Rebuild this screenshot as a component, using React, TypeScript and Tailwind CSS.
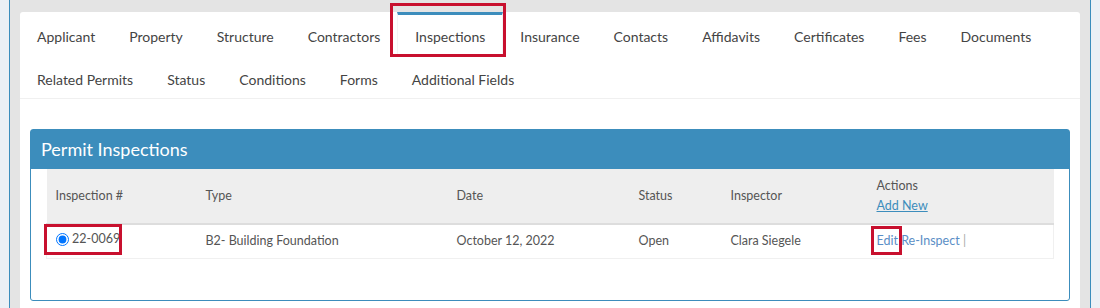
const tabsTop = [
  'Applicant',
  'Property',
  'Structure',
  'Contractors',
  'Inspections',
  'Insurance',
  'Contacts',
  'Affidavits',
  'Certificates',
  'Fees',
  'Documents',
];
const tabsBottom = ['Related Permits', 'Status', 'Conditions', 'Forms', 'Additional Fields'];

function Tab({ label, active }: { label: string; active?: boolean }) {
  return (
    <li className="relative">
      <a
        className={`flex items-center h-[43px] pt-[2px] px-[17px] border-t-[3px] text-[14px] text-[#444] ${
          active ? 'border-[#3c8dbc] border-x border-x-[#f4f4f4] bg-white' : 'border-transparent'
        }`}
      >
        {label}
      </a>
      {active && (
        <span className="absolute -left-[7px] -right-[3px] -top-[9px] bottom-[-2px] border-[3px] border-[#c8102e] pointer-events-none" />
      )}
    </li>
  );
}

export default function App() {
  return (
    <div
      className="w-[1100px] h-[308px] overflow-hidden bg-[#ecf0f5] px-[9px]"
      style={{ fontFamily: 'Lato, "Liberation Sans", sans-serif' }}
    >
      <div className="h-full border-x border-[#3c8dbc] bg-[#e4e4e4] px-[10px] pt-3">
        <div className="h-full bg-white rounded-t-[3px]">
          {/* tabs */}
          <div className="border-b border-[#f0f0f0]">
            <ul className="flex">
              {tabsTop.map((t) => (
                <Tab key={t} label={t} active={t === 'Inspections'} />
              ))}
            </ul>
            <ul className="flex">
              {tabsBottom.map((t) => (
                <Tab key={t} label={t} />
              ))}
            </ul>
          </div>

          {/* panel */}
          <div className="px-[10px] pt-[30px]">
            <div className="border border-[#3c8dbc] rounded-[3px]">
              <div className="bg-[#3c8dbc] h-[39px] flex items-center px-[10px] text-white text-[18px]">
                Permit Inspections
              </div>
              <div className="px-[15px] pb-[41px]">
                <table className="w-full text-[12.5px] text-[#555] border-collapse">
                  <colgroup>
                    <col className="w-[159px]" />
                    <col className="w-[251px]" />
                    <col className="w-[182px]" />
                    <col className="w-[92px]" />
                    <col className="w-[146px]" />
                    <col />
                  </colgroup>
                  <thead>
                    <tr className="bg-[#eeeeee] h-[55px] border-b-2 border-[#dddddd]">
                      <th className="font-normal text-left pl-[9px]">Inspection #</th>
                      <th className="font-normal text-left">Type</th>
                      <th className="font-normal text-left">Date</th>
                      <th className="font-normal text-left">Status</th>
                      <th className="font-normal text-left">Inspector</th>
                      <th className="font-normal text-left leading-[20px]">
                        <div>Actions</div>
                        <a className="text-[#3c8dbc] underline">Add New</a>
                      </th>
                    </tr>
                  </thead>
                  <tbody>
                    <tr className="h-[34px] border-b border-x border-[#f0f0f0]">
                      <td className="pl-[9px]">
                        <span className="relative inline-flex items-center gap-[3px]">
                          <input
                            type="radio"
                            defaultChecked
                            className="w-[13px] h-[13px] m-0"
                          />
                          22-0069
                          <span className="absolute -left-[12px] -right-[2px] -top-[6px] -bottom-[6px] border-[3px] border-[#c8102e]" />
                        </span>
                      </td>
                      <td>B2- Building Foundation</td>
                      <td>October 12, 2022</td>
                      <td>Open</td>
                      <td>Clara Siegele</td>
                      <td>
                        <span className="relative text-[#5b8ec6]">
                          Edit
                          <span className="absolute -left-[6px] -right-[4px] -top-[7px] -bottom-[7px] border-[3px] border-[#c8102e]" />
                        </span>{' '}
                        <span className="text-[#5b8ec6]">Re-Inspect</span>{' '}
                        <span className="text-[#aaa]">|</span>
                      </td>
                    </tr>
                  </tbody>
                </table>
              </div>
            </div>
          </div>
        </div>
      </div>
    </div>
  );
}
